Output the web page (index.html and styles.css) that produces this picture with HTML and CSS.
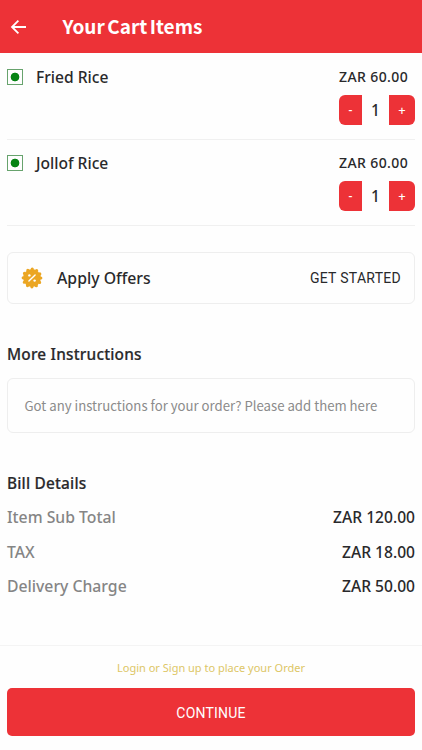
FILE: index.html
```html
<!DOCTYPE html>
<html lang="en">
<head>
<meta charset="utf-8">
<meta name="viewport" content="width=device-width">
<title>Your Cart Items</title>
<link rel="stylesheet" href="styles.css">
</head>
<body>
<div class="screen">
  <header class="topbar">
    <svg class="back" width="18" height="18" viewBox="0 0 18 18"><path d="M17 9H3M9.4 2.6L3 9l6.4 6.4" fill="none" stroke="#fff" stroke-width="1.8"/></svg>
    <h1 class="title">Your Cart Items</h1>
  </header>
  <main class="content">
    <section class="item">
      <span class="veg"></span>
      <span class="name">Fried Rice</span>
      <div class="side">
        <span class="price">ZAR 60.00</span>
        <div class="stepper"><button class="minus">-</button><span class="qty">1</span><button class="plus">+</button></div>
      </div>
    </section>
    <section class="item">
      <span class="veg"></span>
      <span class="name">Jollof Rice</span>
      <div class="side">
        <span class="price">ZAR 60.00</span>
        <div class="stepper"><button class="minus">-</button><span class="qty">1</span><button class="plus">+</button></div>
      </div>
    </section>
    <section class="offers">
      <svg class="badge" width="22" height="22" viewBox="0 0 22 22">
        <circle cx="11" cy="11" r="8.9" fill="#eba623"/>
        <circle cx="11" cy="11" r="8.8" fill="none" stroke="#eba623" stroke-width="3.2" stroke-linecap="round" stroke-dasharray="0 4.608"/>
        <path d="M7.9 14.1l6.2-6.2" stroke="#fff" stroke-width="1.4" stroke-linecap="round"/>
        <circle cx="8.4" cy="8.4" r="1.2" fill="#fff"/><circle cx="13.6" cy="13.6" r="1.2" fill="#fff"/>
      </svg>
      <span class="offers-label">Apply Offers</span>
      <span class="start">GET STARTED</span>
    </section>
    <h2 class="heading more">More Instructions</h2>
    <div class="note"><span>Got any instructions for your order? Please add them here</span></div>
    <h2 class="heading bill">Bill Details</h2>
    <div class="line"><span class="label">Item Sub Total</span><span class="amount">ZAR 120.00</span></div>
    <div class="line"><span class="label">TAX</span><span class="amount">ZAR 18.00</span></div>
    <div class="line"><span class="label">Delivery Charge</span><span class="amount">ZAR 50.00</span></div>
  </main>
  <footer class="footer">
    <span class="login">Login or Sign up to place your Order</span>
    <button class="continue">CONTINUE</button>
  </footer>
</div>
</body>
</html>
```
FILE: styles.css
```css
* { box-sizing: border-box; }
body { margin: 0; background: #fefefe; color: #29292b; font-family: "Noto Sans", sans-serif; font-weight: 500; }
button { border: 0; padding: 0; margin: 0; font: inherit; color: #fff; background: #ed3237; }
h1, h2 { margin: 0; }
span { white-space: nowrap; }
.screen { width: 422px; height: 750px; display: flex; flex-direction: column; overflow: hidden; }
.topbar { height: 53px; flex: none; background: #ed3237; display: flex; align-items: center; padding-left: 9px; }
.title { margin-left: 35.5px; margin-top: -1px; color: #fff; font: 700 19px/28px "Noto Sans CJK SC", sans-serif; word-spacing: -1.8px; white-space: nowrap; }
.content { flex: 1; display: flex; flex-direction: column; padding: 0 7px; }
.item { height: 86px; flex: none; border-bottom: 1px solid #f0f0f0; display: flex; align-items: flex-start; padding-top: 12px; font-size: 15.6px; line-height: 22px; }
.item:first-child { height: 87px; padding-top: 13px; }
.veg { width: 16px; height: 16px; margin-top: 3px; border: 1px solid #67a36d; background: radial-gradient(circle, #078414 4px, transparent 4.7px); }
.name { margin-left: 13px; }
.side { margin-left: auto; width: 76px; padding-top: 1px; }
.price { display: block; font-size: 14px; line-height: 20px; letter-spacing: 0.4px; }
.stepper { display: flex; height: 30px; margin-top: 8px; line-height: 30px; }
.minus { width: 23px; border-radius: 6px 0 0 6px; font-size: 12px; }
.qty { width: 27px; text-align: center; font-size: 15.5px; }
.plus { width: 26px; border-radius: 0 6px 6px 0; font-size: 13px; }
.offers { height: 52px; flex: none; margin-top: 26px; border: 1px solid #eee; border-radius: 6px; display: flex; align-items: center; padding: 0 13px; }
.offers-label { margin-left: 14px; font-size: 15.8px; }
.start { margin-left: auto; font: 400 14px/20px Roboto, sans-serif; letter-spacing: 0.28px; }
.heading { font-size: 15.4px; line-height: 22px; font-weight: 500; letter-spacing: 0.2px; white-space: nowrap; -webkit-text-stroke: 0.2px #29292b; }
.more { margin-top: 40px; }
.note { height: 55px; flex: none; margin-top: 12px; border: 1px solid #eee; border-radius: 6px; padding: 0 0 0 16.5px; display: flex; align-items: center; color: #8b8b8b; font: 400 13.2px/20px "Noto Sans CJK SC", sans-serif; }
.bill { margin-top: 40px; margin-bottom: 5px; }
.line { display: flex; justify-content: space-between; height: 34.5px; line-height: 34px; }
.label { color: #858585; font-size: 15.75px; }
.amount { font-size: 15.6px; }
.footer { height: 105px; flex: none; border-top: 1px solid #f4f4f4; padding: 12px 7px 0; display: flex; flex-direction: column; }
.login { text-align: center; color: #ddc666; font-size: 11px; font-weight: 400; line-height: 20px; }
.continue { height: 48px; margin-top: 10px; border-radius: 5px; font: 400 14px/48px Roboto, sans-serif; letter-spacing: 0.2px; padding-top: 1px; }
```
